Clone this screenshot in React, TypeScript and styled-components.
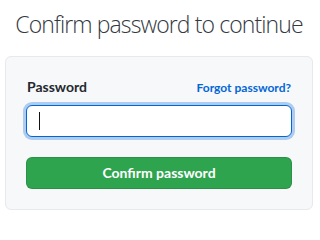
import React from "react";
import styled, { createGlobalStyle } from "styled-components";

const Global = createGlobalStyle`
  html, body { margin: 0; padding: 0; background: #ffffff; }
  body {
    font-family: Lato, "Open Sans", "Liberation Sans", sans-serif;
    color: #24292e;
    -webkit-font-smoothing: antialiased;
  }
`;

const Page = styled.div`
  width: 320px;
  padding: 0 7px 0 5px;
  box-sizing: border-box;
`;

const Title = styled.h1`
  margin: 0;
  padding-top: 8px;
  height: 56px;
  box-sizing: border-box;
  text-align: center;
  white-space: nowrap;
  font-family: "Open Sans", "Noto Sans", sans-serif;
  font-size: 23px;
  line-height: 32px;
  font-weight: 300;
  letter-spacing: -0.9px;
  color: #33393f;
`;

const Box = styled.div`
  background: #f6f8fa;
  border: 1px solid #e6e9ed;
  border-radius: 6px;
  padding: 20px;
  font-size: 14px;
`;

const LabelRow = styled.div`
  display: flex;
  justify-content: space-between;
  align-items: baseline;
  line-height: 20px;
  padding: 0 1px;
`;

const Label = styled.label`
  font-weight: 700;
  font-size: 14px;
  color: #24292e;
`;

const Link = styled.a`
  font-weight: 700;
  font-size: 12px;
  color: #0366d6;
  text-decoration: none;
`;

const Field = styled.div`
  margin-top: 7px;
  height: 32px;
  box-sizing: border-box;
  background: #ffffff;
  border: 1px solid #0366d6;
  border-radius: 6px;
  box-shadow: 0 0 0 3px rgba(3, 102, 214, 0.3);
  padding: 0 12px;
  display: flex;
  align-items: center;
`;

const Caret = styled.span`
  display: block;
  width: 1px;
  height: 18px;
  background: #111;
`;

const Button = styled.button`
  margin-top: 20px;
  width: 100%;
  height: 32px;
  box-sizing: border-box;
  background: #2ea44f;
  border: 1px solid rgba(27, 31, 35, 0.15);
  border-radius: 6px;
  color: #ffffff;
  font-family: inherit;
  font-size: 14px;
  font-weight: 700;
  line-height: 20px;
  cursor: pointer;
`;

export default function App() {
  return (
    <>
      <Global />
      <Page>
        <Title>Confirm password to continue</Title>
        <Box>
          <LabelRow>
            <Label>Password</Label>
            <Link href="#">Forgot password?</Link>
          </LabelRow>
          <Field>
            <Caret />
          </Field>
          <Button>Confirm password</Button>
        </Box>
      </Page>
    </>
  );
}
